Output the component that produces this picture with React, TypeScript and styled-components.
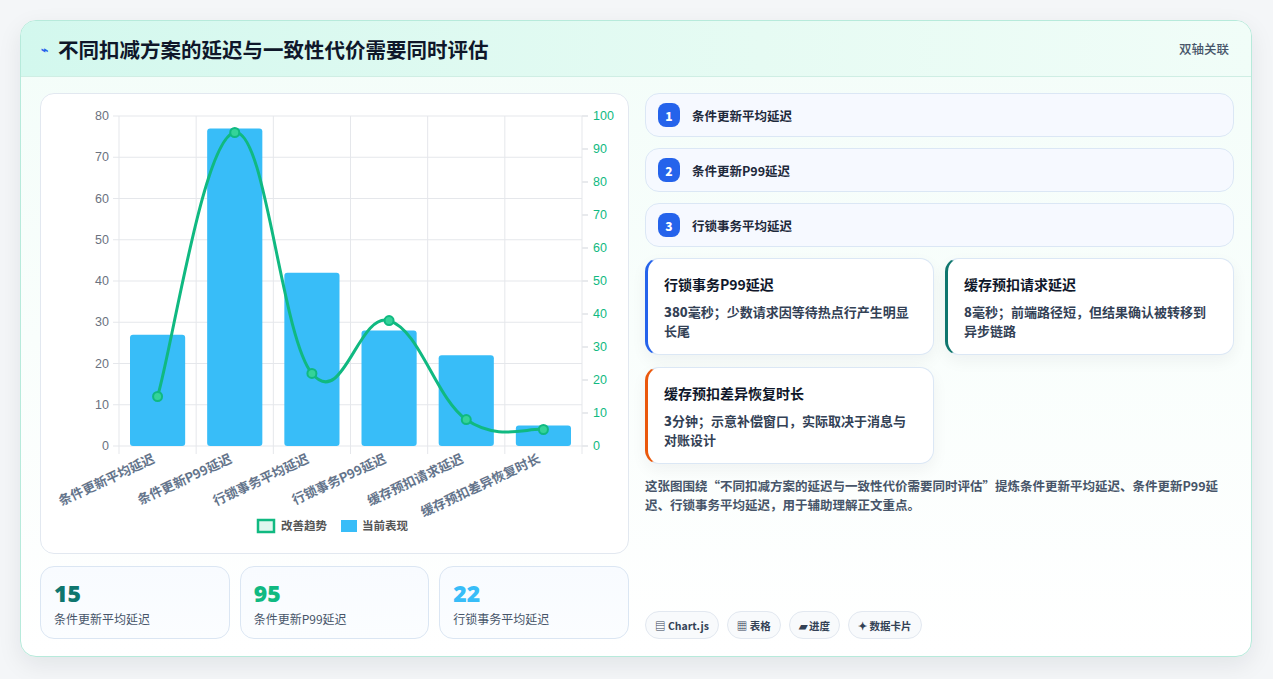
import React from "react";
import styled, { createGlobalStyle } from "styled-components";

const Global = createGlobalStyle`
  html, body { margin: 0; padding: 0; background: #fff; }
  body { font-family: "Noto Sans CJK SC", "Noto Sans", sans-serif; }
  * { box-sizing: border-box; }
`;

const Page = styled.div`
  width: 1273px; height: 679px; padding: 20px 21px 22px 20px;
  background: #f4f6f8;
`;
const Card = styled.div`
  height: 100%; border-radius: 16px; border: 1px solid #b7eadb;
  background: linear-gradient(180deg, #f3fdf9 0%, #ffffff 100%);
  box-shadow: 0 8px 24px rgba(15, 23, 42, 0.08);
  overflow: hidden; display: flex; flex-direction: column;
`;
const Header = styled.div`
  height: 56px; flex: none; display: flex; align-items: center; justify-content: space-between;
  padding: 0 22px 0 20px; border-bottom: 1px solid #cfeee4;
  background: linear-gradient(90deg, #d3f8ee 0%, #e6fbf3 60%, #f1fdf8 100%);
`;
const Title = styled.h1`
  margin: 0; font-size: 20.5px; font-weight: 700; color: #0f172a; display: flex; align-items: center; gap: 10px;
`;
const Tag = styled.span` font-size: 12.5px; color: #475569; font-weight: 500; `;
const Body = styled.div`
  flex: 1; display: grid; grid-template-columns: 589px 589px; gap: 16px; padding: 16px 19px 18px 19px;
`;
const Col = styled.div` display: flex; flex-direction: column; gap: 12px; min-height: 0; `;
const ChartBox = styled.div`
  height: 461px; background: #fff; border: 1px solid #e2e8f0; border-radius: 14px;
`;
const Stats = styled.div` display: grid; grid-template-columns: repeat(3, 1fr); gap: 10px; `;
const Stat = styled.div`
  height: 73px; border: 1px solid #dbe6f3; border-radius: 14px; padding: 11px 13px;
  background: linear-gradient(180deg, #f8fbff, #fbfdff);
`;
const StatNum = styled.div<{ c: string }>` font-size: 23px; font-weight: 800; color: ${p => p.c}; line-height: 30px; font-family: "Open Sans", "Noto Sans", sans-serif; `;
const StatLabel = styled.div` font-size: 12px; color: #475569; margin-top: 2px; `;
const RightCol = styled.div` display: flex; flex-direction: column; `;
const List = styled.div` display: flex; flex-direction: column; gap: 11px; `;
const Item = styled.div`
  height: 44px; border: 1px solid #dbe7f5; border-radius: 14px; background: #f6f9ff;
  display: flex; align-items: center; gap: 12px; padding: 0 12px;
  font-size: 12.5px; font-weight: 600; color: #1e293b;
`;
const Badge = styled.span`
  width: 22px; height: 24px; border-radius: 8px; background: #2563eb; color: #fff;
  font-size: 12px; font-weight: 800; display: flex; align-items: center; justify-content: center;
`;
const Cards = styled.div` display: grid; grid-template-columns: 1fr 1fr; gap: 12px 11px; margin-top: 11px; `;
const Note = styled.div<{ c: string }>`
  height: 97px; background: #fff; border: 1px solid #dbe7f5; border-left: 3px solid ${p => p.c};
  border-radius: 14px; padding: 15px 16px; box-shadow: 0 6px 16px rgba(15,23,42,0.05);
`;
const NoteTitle = styled.div` font-size: 14px; font-weight: 700; color: #0f172a; margin-bottom: 8px; line-height: 20px; `;
const NoteText = styled.div` font-size: 13px; font-weight: 600; color: #334155; line-height: 19px; b { font-weight: 800; } `;
const Para = styled.p` margin: 12px 0 0; font-size: 12.5px; line-height: 19px; color: #475569; font-weight: 600; `;
const Chips = styled.div` margin-top: auto; display: flex; gap: 8px; `;
const Chip = styled.span`
  height: 28px; padding: 0 9px; border: 1px solid #e2e8f0; border-radius: 14px; background: #f8fafc;
  display: flex; align-items: center; gap: 4px; font-size: 10.5px; font-weight: 700; color: #334155;
`;

const cats = ["条件更新平均延迟", "条件更新P99延迟", "行锁事务平均延迟", "行锁事务P99延迟", "缓存预扣请求延迟", "缓存预扣差异恢复时长"];
const bars = [27, 77, 42, 28, 22, 5];
const line = [15, 95, 22, 38, 8, 5];

function Chart() {
  const L = 78, R = 541, T = 22, B = 352;
  const H = B - T, cw = (R - L) / 6;
  const pts = line.map((v, i) => [L + cw * (i + 0.5), B - (H * v) / 100]);
  let d = `M${pts[0][0]},${pts[0][1]}`;
  for (let i = 0; i < pts.length - 1; i++) {
    const p0 = pts[Math.max(i - 1, 0)], p1 = pts[i], p2 = pts[i + 1], p3 = pts[Math.min(i + 2, pts.length - 1)];
    const t = 0.2;
    d += ` C${p1[0] + (p2[0] - p0[0]) * t},${p1[1] + (p2[1] - p0[1]) * t} ${p2[0] - (p3[0] - p1[0]) * t},${p2[1] - (p3[1] - p1[1]) * t} ${p2[0]},${p2[1]}`;
  }
  return (
    <svg width="589" height="461" style={{ display: "block" }} fontFamily="'Noto Sans CJK SC', sans-serif">
      {[0, 1, 2, 3, 4, 5, 6, 7, 8].map(i => {
        const y = B - (H * i) / 8;
        return <g key={i}>
          <line x1={L - 6} x2={R} y1={y} y2={y} stroke="#e5e7eb" />
          <text x={L - 10} y={y + 4} fontSize="12.5" fill="#6b7280" textAnchor="end" fontFamily="Liberation Sans, sans-serif">{i * 10}</text>
        </g>;
      })}
      {[0, 1, 2, 3, 4, 5, 6, 7, 8, 9, 10].map(i => {
        const y = B - (H * i) / 10;
        return <g key={i}>
          <line x1={R} x2={R + 6} y1={y} y2={y} stroke="#d1d5db" />
          <text x={R + 11} y={y + 4} fontSize="12.5" fill="#10b981" fontFamily="Liberation Sans, sans-serif">{i * 10}</text>
        </g>;
      })}
      {[0, 1, 2, 3, 4, 5, 6].map(i => <line key={i} x1={L + cw * i} x2={L + cw * i} y1={T} y2={B + 8} stroke="#e5e7eb" />)}
      {bars.map((v, i) => {
        const h = (H * v) / 80;
        return <rect key={i} x={L + cw * i + 11} y={B - h} width={cw - 22} height={h} rx="3" fill="#38bdf8" />;
      })}
      <path d={d} fill="none" stroke="#10b981" strokeWidth="3" />
      {pts.map((p, i) => <circle key={i} cx={p[0]} cy={p[1]} r="4.5" fill="#34d399" stroke="#10b981" strokeWidth="2" />)}
      {cats.map((c, i) => (
        <text key={i} transform={`translate(${L + cw * (i + 0.5) - 2},${B + 16}) rotate(-25)`} fontSize="13" fontWeight="700" fill="#64748b" textAnchor="end">{c}</text>
      ))}
      <rect x="217" y="426" width="16" height="12" fill="#e0f7ee" stroke="#10b981" strokeWidth="2.5" />
      <text x="240" y="436" fontSize="11.5" fontWeight="600" fill="#555">改善趋势</text>
      <rect x="300" y="426" width="16" height="12" fill="#38bdf8" />
      <text x="321" y="436" fontSize="11.5" fontWeight="600" fill="#555">当前表现</text>
    </svg>
  );
}

export default function App() {
  return (
    <Page>
      <Global />
      <Card>
        <Header>
          <Title><span style={{ color: "#2563eb", fontSize: 12 }}>⌁</span>不同扣减方案的延迟与一致性代价需要同时评估</Title>
          <Tag>双轴关联</Tag>
        </Header>
        <Body>
          <Col>
            <ChartBox><Chart /></ChartBox>
            <Stats>
              <Stat><StatNum c="#0f766e">15</StatNum><StatLabel>条件更新平均延迟</StatLabel></Stat>
              <Stat><StatNum c="#10b981">95</StatNum><StatLabel>条件更新P99延迟</StatLabel></Stat>
              <Stat><StatNum c="#38bdf8">22</StatNum><StatLabel>行锁事务平均延迟</StatLabel></Stat>
            </Stats>
          </Col>
          <RightCol>
            <List>
              <Item><Badge>1</Badge>条件更新平均延迟</Item>
              <Item><Badge>2</Badge>条件更新P99延迟</Item>
              <Item><Badge>3</Badge>行锁事务平均延迟</Item>
            </List>
            <Cards>
              <Note c="#2563eb"><NoteTitle>行锁事务P99延迟</NoteTitle><NoteText><b>380</b>毫秒；少数请求因等待热点行产生明显长尾</NoteText></Note>
              <Note c="#0f766e"><NoteTitle>缓存预扣请求延迟</NoteTitle><NoteText><b>8</b>毫秒；前端路径短，但结果确认被转移到异步链路</NoteText></Note>
              <Note c="#ea580c"><NoteTitle>缓存预扣差异恢复时长</NoteTitle><NoteText><b>3</b>分钟；示意补偿窗口，实际取决于消息与对账设计</NoteText></Note>
            </Cards>
            <Para>这张图围绕“不同扣减方案的延迟与一致性代价需要同时评估”提炼条件更新平均延迟、条件更新P99延迟、行锁事务平均延迟，用于辅助理解正文重点。</Para>
            <Chips>
              <Chip>▤ Chart.js</Chip>
              <Chip>▦ 表格</Chip>
              <Chip>▰ 进度</Chip>
              <Chip>✦ 数据卡片</Chip>
            </Chips>
          </RightCol>
        </Body>
      </Card>
    </Page>
  );
}
